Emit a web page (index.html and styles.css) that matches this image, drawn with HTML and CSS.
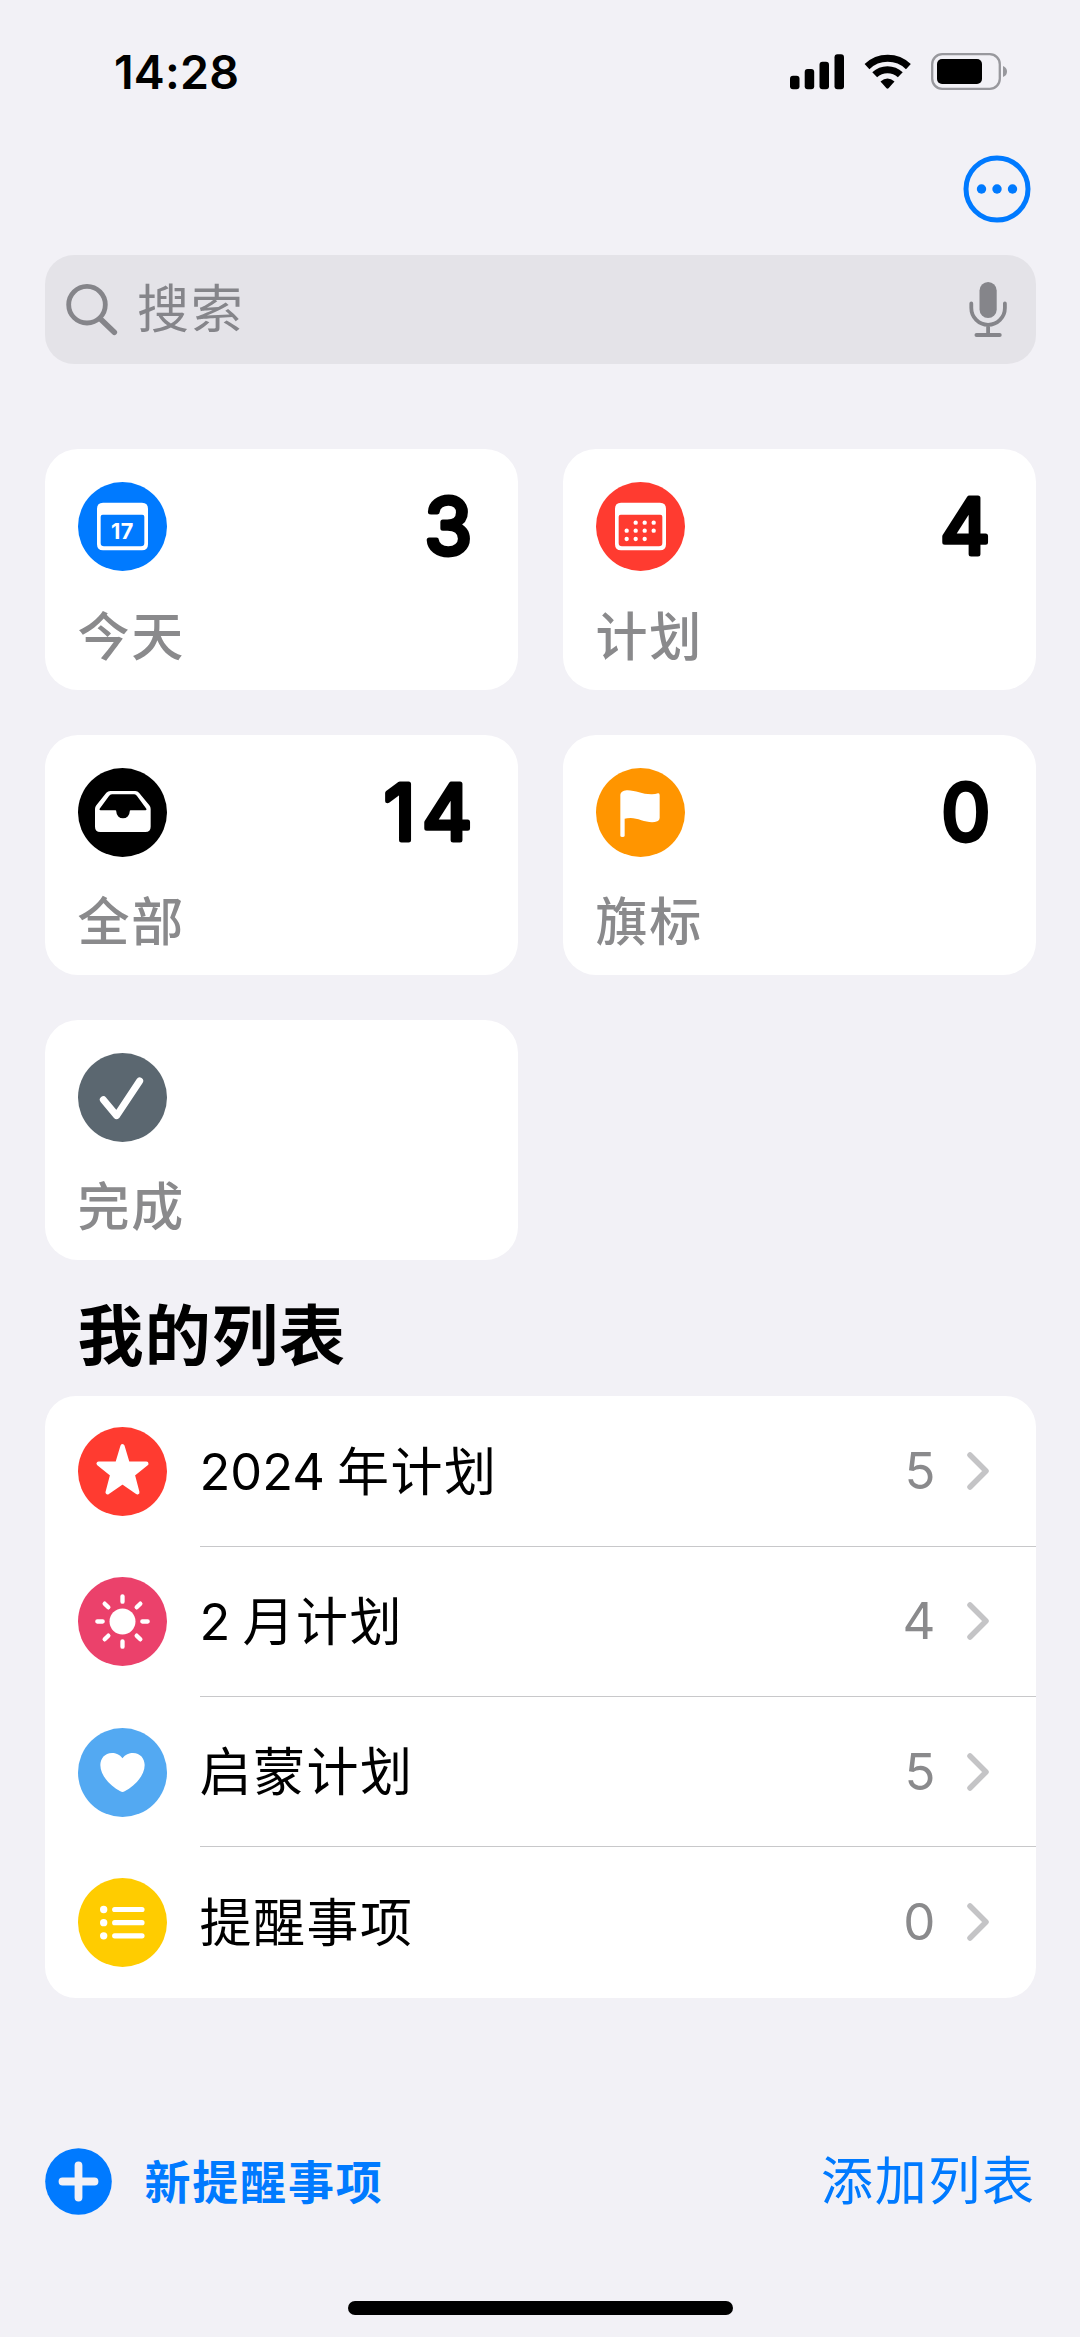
FILE: index.html
```html
<!DOCTYPE html>
<html lang="zh-CN">
<head>
<meta charset="utf-8">
<title>提醒事项</title>
<link rel="stylesheet" href="styles.css">
</head>
<body>
<div class="screen">
  <header class="status">
    <span class="time">14:28</span>
    <svg class="status-icons" width="218" height="38" viewBox="790 53 218 38">
      <rect x="790" y="75.7" width="9.5" height="13.6" rx="3"/>
      <rect x="804.7" y="69" width="9.5" height="20.3" rx="3"/>
      <rect x="819.5" y="61.7" width="9.5" height="27.6" rx="3"/>
      <rect x="834.5" y="54.3" width="9.5" height="35" rx="3"/>
      <g fill="none" stroke="#000" stroke-width="7">
        <path d="M867 66.6A30 30 0 0 1 908.4 66.6"/>
        <path d="M874.700 74.800A18.500 18.500 0 0 1 900.300 74.800"/>
      </g>
      <path d="M880.500 81.600Q887.500 75.400 894.500 81.600L888.500 88.300Q887.500 89.200 886.500 88.300Z"/>
      <rect x="932.200" y="54.200" width="67.600" height="34.600" rx="10" fill="none" stroke="#98989d" stroke-width="2.300"/>
      <rect x="937" y="59" width="45" height="25" rx="5"/>
      <path d="M1003 66Q1007 67.500 1007 71.500T1003 77Z" fill="#98989d"/>
    </svg>
  </header>

  <nav class="toolbar">
    <svg class="more" width="68" height="68" viewBox="0 0 68 68">
      <circle cx="34" cy="34" r="31" fill="none" stroke="#007aff" stroke-width="5"/>
      <g fill="#007aff"><circle cx="18.500" cy="34" r="4.700"/><circle cx="34" cy="34" r="4.700"/><circle cx="49.500" cy="34" r="4.700"/></g>
    </svg>
  </nav>

  <div class="search">
    <svg width="54" height="54" viewBox="64 281 54 54" fill="none" stroke="#85858a" stroke-linecap="round">
      <circle cx="87" cy="303.700" r="18.300" stroke-width="4.800"/>
      <path d="M101 318.500L114.300 331.300" stroke-width="5.600"/>
    </svg>
    <span class="placeholder">搜索</span>
    <svg width="38" height="57" viewBox="968.500 281 38 57" fill="none" stroke="#85858a" stroke-linecap="round">
      <rect x="979" y="282" width="17.200" height="36" rx="8.600" fill="#85858a" stroke="none"/>
      <path d="M970.800 303.500V308A16.800 16.800 0 0 0 1004.400 308V303.500M987.600 326V334" stroke-width="3.800"/>
      <path d="M976 335H999.200" stroke-width="4"/>
    </svg>
  </div>

  <main class="cards">
    <section class="card">
      <div class="card-top">
        <svg class="icon" viewBox="0 0 267 267">
          <circle cx="133.500" cy="133.500" r="133.500" fill="#007aff"/>
          <path fill="#fff" fill-rule="evenodd" d="M75 62H192Q210 62 210 80V187Q210 205 192 205H75Q57 205 57 187V80Q57 62 75 62ZM74 98Q68 98 68 104V183Q68 193 78 193H189Q199 193 199 183V104Q199 98 193 98Z"/>
          <text class="icon-date" x="133" y="171" text-anchor="middle">17</text>
        </svg>
        <svg class="count" width="160" height="110"><text x="154" y="84" text-anchor="end">3</text></svg>
      </div>
      <div class="card-label">今天</div>
    </section>
    <section class="card">
      <div class="card-top">
        <svg class="icon" viewBox="0 0 267 267">
          <circle cx="133.500" cy="133.500" r="133.500" fill="#ff3b30"/>
          <path fill="#fff" fill-rule="evenodd" d="M75 62H192Q210 62 210 80V187Q210 205 192 205H75Q57 205 57 187V80Q57 62 75 62ZM74 98Q68 98 68 104V183Q68 193 78 193H189Q199 193 199 183V104Q199 98 193 98Z"/>
          <path d="M119 122h.1M146 122h.1M173 122h.1M92 146h.1M119 146h.1M146 146h.1M173 146h.1M92 171h.1M119 171h.1M146 171h.1" stroke="#fff" stroke-width="13" stroke-linecap="round"/>
        </svg>
        <svg class="count" width="160" height="110"><text x="154" y="84" text-anchor="end">4</text></svg>
      </div>
      <div class="card-label">计划</div>
    </section>
    <section class="card">
      <div class="card-top">
        <svg class="icon" viewBox="0 0 267 267">
          <circle cx="133.500" cy="133.500" r="133.500"/>
          <path fill="#fff" fill-rule="evenodd" d="M97 69H172Q179 69 183 74L214 112Q218 117 218 123V176Q218 192 202 192H67Q51 192 51 176V123Q51 117 55 112L85 74Q90 69 97 69ZM102 79Q96 79 93 84L65 122Q63 127 68 127H112Q115 127 115 131A20 20 0 0 0 155 131Q155 127 158 127H202Q207 127 205 122L177 84Q174 79 169 79Z"/>
        </svg>
        <svg class="count" width="160" height="110"><text x="154" y="84" text-anchor="end">14</text></svg>
      </div>
      <div class="card-label">全部</div>
    </section>
    <section class="card">
      <div class="card-top">
        <svg class="icon" viewBox="0 0 267 267">
          <circle cx="133.500" cy="133.500" r="133.500" fill="#ff9500"/>
          <path fill="#fff" d="M73 80Q74 69 92 67C118 66 140 80 168 79Q178 79 186 76Q191 75 191 82V150Q191 157 184 160C158 170 130 150 104 150Q92 150 86 152V203Q86 207 79.500 207Q73 207 73 203Z"/>
        </svg>
        <svg class="count" width="160" height="110"><text x="154" y="84" text-anchor="end">0</text></svg>
      </div>
      <div class="card-label">旗标</div>
    </section>
    <section class="card">
      <div class="card-top">
        <svg class="icon" viewBox="0 0 267 267">
          <circle cx="133.500" cy="133.500" r="133.500" fill="#5b6770"/>
          <path d="M76 140L116 188L185 84" fill="none" stroke="#fff" stroke-width="21" stroke-linecap="round" stroke-linejoin="round"/>
        </svg>
      </div>
      <div class="card-label">完成</div>
    </section>
  </main>

  <h1 class="heading">我的列表</h1>

  <ul class="lists">
    <li class="row">
      <svg class="icon" viewBox="0 0 267 267">
        <circle cx="133.500" cy="133.500" r="133.500" fill="#ff3b30"/>
        <path fill="#fff" stroke="#fff" stroke-width="13" stroke-linejoin="round" d="M133.500 58L149 110H205L164 143L178 196L133.500 165L89 196L103 143L62 110H118Z"/>
      </svg>
      <div class="row-body"><span class="row-name"><span class="num">2024 </span>年计划</span><span class="row-count">5</span>
        <svg class="chevron" viewBox="0 0 22 38"><path d="M3 3L19 19L3 35"/></svg></div>
    </li>
    <li class="row">
      <svg class="icon" viewBox="0 0 267 267">
        <circle cx="133.500" cy="133.500" r="133.500" fill="#eb416b"/>
        <circle cx="133.500" cy="133.500" r="39" fill="#fff"/>
        <path stroke="#fff" stroke-width="13" stroke-linecap="round" d="M133.500 58v16M133.500 193v16M58 133.500h16M193 133.500h16M80 80l11 11M176 176l11 11M80 187l11-11M176 91l11-11"/>
      </svg>
      <div class="row-body"><span class="row-name"><span class="num">2 </span>月计划</span><span class="row-count">4</span>
        <svg class="chevron" viewBox="0 0 22 38"><path d="M3 3L19 19L3 35"/></svg></div>
    </li>
    <li class="row">
      <svg class="icon" viewBox="0 0 267 267">
        <circle cx="133.500" cy="133.500" r="133.500" fill="#53a9f2"/>
        <path fill="#fff" d="M133.500 91C142 79 153 75 165 75C187 75 200 92 200 111C200 144 170 173 140 190Q133.500 194 127 190C97 173 67 144 67 111C67 92 80 75 102 75C114 75 125 79 133.500 91Z"/>
      </svg>
      <div class="row-body"><span class="row-name">启蒙计划</span><span class="row-count">5</span>
        <svg class="chevron" viewBox="0 0 22 38"><path d="M3 3L19 19L3 35"/></svg></div>
    </li>
    <li class="row">
      <svg class="icon" viewBox="0 0 267 267">
        <circle cx="133.500" cy="133.500" r="133.500" fill="#ffcc00"/>
        <path stroke="#fff" stroke-width="15.500" stroke-linecap="round" d="M110 94.500H192M110 134H192M110 173.500H192"/>
        <path stroke="#fff" stroke-width="22" stroke-linecap="round" d="M77 94.500h.1M77 134h.1M77 173.500h.1"/>
      </svg>
      <div class="row-body"><span class="row-name">提醒事项</span><span class="row-count">0</span>
        <svg class="chevron" viewBox="0 0 22 38"><path d="M3 3L19 19L3 35"/></svg></div>
    </li>
  </ul>

  <footer class="actions">
    <svg width="67" height="67" viewBox="0 0 67 67">
      <circle cx="33.500" cy="33.500" r="33.300" fill="#007aff"/>
      <path d="M17.500 33.500H49.500M33.500 17.500V49.500" stroke="#f2f1f6" stroke-width="7.800" stroke-linecap="round"/>
    </svg>
    <span class="new">新提醒事项</span>
    <span class="add">添加列表</span>
  </footer>
  <div class="home"></div>
</div>
</body>
</html>
```
FILE: styles.css
```css
* { box-sizing: border-box; margin: 0; padding: 0; }

body {
  background: #f2f1f6;
  color: #000;
  font-family: Inter, "Noto Sans CJK SC", sans-serif;
}

svg { display: block; flex: none; }

.screen {
  display: flex;
  flex-direction: column;
  width: 1080px;
  height: 2337px;
  padding: 0 44.5px;
  overflow: hidden;
}

.status {
  display: flex;
  align-items: center;
  justify-content: space-between;
  height: 144px;
  padding: 0 27.5px 0 69.5px;
}

.time { font-size: 46.5px; font-weight: 600; letter-spacing: 0.2px; }

.toolbar {
  display: flex;
  justify-content: flex-end;
  height: 111px;
  padding: 11px 5px 0 0;
}

.search {
  display: flex;
  align-items: center;
  height: 108.7px;
  padding: 0 29px 0 19.5px;
  border-radius: 29px;
  background: #e4e3e8;
}

.placeholder {
  flex: 1;
  margin-left: 19px;
  padding-top: 2px;
  color: #85858a;
  font-size: 52px;
  letter-spacing: 1.8px;
  line-height: 60px;
}

.cards {
  display: grid;
  grid-template-columns: 473px 473px;
  gap: 44.7px 45px;
  margin-top: 85.6px;
}

.card {
  height: 240.6px;
  padding: 33px 33px 0;
  border-radius: 33px;
  background: #fff;
}

.card-top { display: flex; justify-content: space-between; height: 89px; }

.icon { width: 89px; height: 89px; }

.icon-date {
  fill: #fff;
  font-size: 65px;
  font-weight: 700;
  letter-spacing: 1px;
}

.count { margin-top: -12px; }

.count text {
  fill: #000;
  stroke: #000;
  stroke-width: 5px;
  stroke-linejoin: round;
  font-size: 77px;
  font-weight: 400;
  letter-spacing: 7px;
}

.card-label {
  margin: 36.5px 0 0;
  color: #8a8a8c;
  font-size: 52px;
  font-weight: 500;
  letter-spacing: 1.8px;
  line-height: 60px;
}

.heading {
  margin: 36px 0 19.8px 33px;
  font-size: 66px;
  font-weight: 700;
  letter-spacing: 1.2px;
  line-height: 80px;
}

.lists {
  border-radius: 31px;
  background: #fff;
  list-style: none;
}

.row {
  display: flex;
  align-items: center;
  gap: 33px;
  height: 150.4px;
  padding-left: 33px;
}

.row-body {
  display: flex;
  flex: 1;
  align-items: center;
  height: 150.4px;
  padding-right: 47px;
  border-bottom: 1px solid #c8c8ca;
}

.row:last-child .row-body { border-bottom-color: transparent; }

.row-name { flex: 1; padding-top: 3px; font-size: 52px; letter-spacing: 1.5px; line-height: 60px; }

.num { font-size: 50.500px; letter-spacing: 0; word-spacing: -2px; vertical-align: 1px; }

.row-count { color: #8a8a8c; font-size: 51px; line-height: 60px; }

.chevron {
  width: 22px;
  height: 38px;
  margin-left: 31px;
  fill: none;
  stroke: #c4c4c6;
  stroke-width: 5.5px;
  stroke-linecap: round;
  stroke-linejoin: round;
}

.actions {
  display: flex;
  align-items: center;
  height: 67px;
  margin-top: 150.500px;
  color: #007aff;
  line-height: 60px;
}

.new { flex: 1; margin-left: 33px; padding-top: 1px; font-size: 46px; font-weight: 700; letter-spacing: 1.8px; }

.add { font-size: 52px; letter-spacing: 1.6px; }

.home {
  align-self: center;
  width: 385px;
  height: 14px;
  margin-top: 86px;
  border-radius: 7px;
  background: #000;
}
```
